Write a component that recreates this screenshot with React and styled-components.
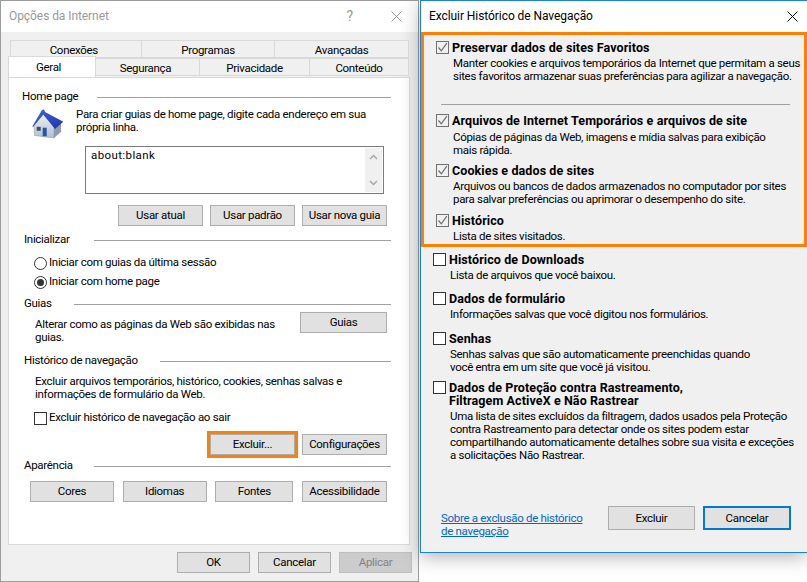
import React from 'react'
import styled, { createGlobalStyle } from 'styled-components'

const GlobalStyle = createGlobalStyle`
    html, body {
        margin: 0;
        padding: 0;
        background: #fff;
    }
    body {
        font-family: Roboto, "Liberation Sans", sans-serif;
        font-size: 11.5px;
        letter-spacing: -0.3px;
        line-height: 13px;
        color: #000;
    }
`

const Desktop = styled.div`
    display: flex;
    align-items: flex-start;
    width: 807px;
    height: 582px;
    overflow: hidden;
`

const OptionsWindow = styled.div`
    box-sizing: border-box;
    flex: none;
    width: 419px;
    height: 582px;
    border: 1px solid #9c9c9c;
    background: #f0f0f0;
    display: flex;
    flex-direction: column;
`

const TitleBar = styled.div`
    flex: none;
    display: flex;
    align-items: center;
    height: 31px;
    padding: 0 ${p => p.$right}px 0 8px;
    background: #fff;
    color: ${p => (p.$inactive ? '#999' : '#000')};
    font-size: 12px;
    letter-spacing: -0.07px;
`

const TitleText = styled.span`
    flex: 1;
`

const HelpMark = styled.span`
    margin-right: 38px;
    color: #999;
    font-size: 14px;
`

const Tabs = styled.div`
    margin: 8px 9px 0 7px;
    height: 37px;
    display: flex;
    flex-direction: column;
`

const TabRow = styled.div`
    display: flex;
    height: 18px;
    padding-left: ${p => p.$indent || 0}px;
`

const Tab = styled.div`
    box-sizing: border-box;
    width: ${p => p.$w}px;
    height: ${p => (p.$active ? 21 : 18)}px;
    margin-top: ${p => (p.$active ? -2 : 0)}px;
    padding-top: ${p => (p.$active ? 0 : 2)}px;
    padding-right: ${p => p.$shift || 0}px;
    position: relative;
    z-index: ${p => (p.$active ? 2 : 1)};
    display: flex;
    align-items: center;
    justify-content: center;
    border: 1px solid #d9d9d9;
    border-bottom: ${p => (p.$active ? 'none' : '1px solid #d9d9d9')};
    border-left-width: ${p => (p.$first || p.$active ? 1 : 0)}px;
    background: ${p => (p.$active ? '#fff' : '#f0f0f0')};
`

const Panel = styled.div`
    box-sizing: border-box;
    margin: 0 8px 0 7px;
    height: 468px;
    padding: 11px 18px 0 13px;
    border: 1px solid #d9d9d9;
    background: #fff;
    display: flex;
    flex-direction: column;
`

const GroupTitle = styled.div`
    display: flex;
    align-items: center;
    height: 16px;
    flex: none;
    margin-top: ${p => p.$top || 0}px;
    padding-left: ${p => p.$indent || 0}px;
    white-space: nowrap;
`

const GroupLabel = styled.span`
    width: ${p => p.$w}px;
    flex: none;
    padding-bottom: 2px;
`

const GroupLine = styled.span`
    flex: 1;
    height: 1px;
    background: #a0a0a0;
`

const IntroRow = styled.div`
    display: flex;
    height: 30px;
    margin-top: 4px;
    padding-left: 10px;
`

const HouseIcon = styled.svg`
    width: 32px;
    height: 30px;
    flex: none;
`

const IntroText = styled.div`
    margin: -1px 0 0 12px;
    white-space: nowrap;
`

const HomeBox = styled.div`
    box-sizing: border-box;
    display: flex;
    justify-content: space-between;
    width: 299px;
    height: 48px;
    margin: 7px 0 0 63px;
    padding: 1px;
    border: 1px solid #7a7a7a;
`

const HomeValue = styled.span`
    padding: 1px 0 0 4px;
    letter-spacing: 0.4px;
`

const ScrollBar = styled.div`
    width: 17px;
    background: #f0f0f0;
    display: flex;
    flex-direction: column;
    justify-content: space-between;
    align-items: center;
    padding: 6px 0;
`

const Chevron = styled.svg`
    width: 9px;
    height: 6px;
`

const ButtonRow = styled.div`
    display: flex;
    justify-content: ${p => p.$spread ? 'space-between' : 'flex-end'};
    gap: ${p => p.$spread ? 0 : 7}px;
    height: 21px;
    margin-top: ${p => p.$top}px;
    padding: 0 4px 0 ${p => p.$left || 0}px;
`

const Button = styled.button`
    box-sizing: border-box;
    flex: none;
    width: ${p => p.$w}px;
    height: 21px;
    padding: 0;
    border: 1px solid ${p => (p.disabled ? '#bfbfbf' : '#adadad')};
    border-radius: 0;
    background: ${p => (p.disabled ? '#cccccc' : '#e1e1e1')};
    color: ${p => (p.disabled ? '#838383' : '#000')};
    font: inherit;
    letter-spacing: inherit;
    outline: ${p => (p.$marked ? '3px solid #ff8000' : 'none')};
    outline-offset: 0;
`

const OptionRow = styled.div`
    display: flex;
    align-items: center;
    gap: 2px;
    height: 16px;
    margin-top: ${p => p.$top}px;
    padding-left: 12px;
    white-space: nowrap;
`

const OptionLabel = styled.span`
    padding-bottom: 2px;
`

const Radio = styled.span`
    box-sizing: border-box;
    flex: none;
    width: 13px;
    height: 13px;
    border: 1px solid #333;
    border-radius: 50%;
    display: flex;
    align-items: center;
    justify-content: center;

    &::after {
        content: '';
        width: 7px;
        height: 7px;
        border-radius: 50%;
        background: ${p => (p.$on ? '#333' : 'transparent')};
    }
`

const Check = styled.span`
    box-sizing: border-box;
    flex: none;
    width: 13px;
    height: 13px;
    border: 1px solid ${p => (p.$on ? '#707070' : '#333')};
    background: ${p => (p.$bg ? '#fff' : 'transparent')};
    display: flex;
    align-items: center;
    justify-content: center;
`

const TabsGuideRow = styled.div`
    display: flex;
    justify-content: space-between;
    height: 41px;
    padding: 0 4px 0 13px;
    flex: none;
`

const Para = styled.div`
    margin-top: ${p => p.$top || 0}px;
    padding-left: ${p => p.$indent || 0}px;
    white-space: nowrap;
`

const DialogFooter = styled.div`
    display: flex;
    justify-content: flex-end;
    gap: 8px;
    padding: 7px 6px 0 0;
`

const DeleteWindow = styled.div`
    box-sizing: border-box;
    flex: none;
    width: 387px;
    height: 553px;
    margin-left: 1px;
    border: 1px solid #1883d7;
    border-right: none;
    background: #f0f0f0;
    display: flex;
    flex-direction: column;
    box-shadow: 0 4px 18px rgba(0, 0, 0, 0.3);
    position: relative;
`

const CloseIcon = styled.svg`
    width: 11px;
    height: 11px;
    flex: none;
`

const Highlight = styled.div`
    box-sizing: border-box;
    height: 215px;
    border: 3px solid #ff8000;
    flex: none;
    display: flex;
    flex-direction: column;
`

const Divider = styled.div`
    height: 1px;
    width: 349px;
    margin: 21px 0 0 17px;
    background: #a0a0a0;
    flex: none;
`

const Item = styled.div`
    display: flex;
    gap: 3px;
    margin-top: ${p => p.$top}px;
    padding-left: ${p => p.$left}px;
    flex: none;
`

const ItemBody = styled.div`
    white-space: nowrap;
`

const ItemTitle = styled.div`
    font-weight: 700;
    font-size: 12.5px;
    letter-spacing: 0.1px;
`

const ItemText = styled.div`
    margin: ${p => p.$gap}px 0 0 1px;
`

const ItemFooter = styled.div`
    margin-top: auto;
    padding: 0 16px 14px 20px;
    display: flex;
    align-items: flex-start;
    gap: 8px;
`

const HelpLink = styled.a`
    flex: 1;
    margin-top: 6px;
    color: #0066cc;
    text-decoration: underline;
    white-space: nowrap;
`

const FooterButton = styled(Button)`
    height: 24px;
    width: ${p => p.$w}px;
    border: ${p => (p.$primary ? '2px solid #0078d7' : '1px solid #adadad')};
`

const Tick = () => (
    <svg width="11" height="11" viewBox="0 0 11 11">
        <path d="M1.5 5.5 L4.3 8.8 L9.8 1.2" fill="none" stroke="#6e6e6e" strokeWidth="1.2" />
    </svg>
)

const House = () => (
    <HouseIcon viewBox="0 0 32 30">
        <defs>
            <linearGradient id="front" x1="0" y1="0" x2="0" y2="1">
                <stop offset="0" stopColor="#eef1f6" />
                <stop offset="1" stopColor="#b4bfcc" />
            </linearGradient>
            <linearGradient id="roof" x1="0" y1="0" x2="1" y2="1">
                <stop offset="0" stopColor="#3f66dc" />
                <stop offset="1" stopColor="#1d35a8" />
            </linearGradient>
        </defs>
        <path d="M22 19 L29 13 L29 23 L22 29 Z" fill="#8d9cb2" />
        <path d="M11.3 5 L2 16 L2.5 26.5 L22 29 L22 18 Z" fill="url(#front)" stroke="#8793a5" strokeWidth="0.5" />
        <path d="M10 1 L12 0.6 L13 3 L31.3 12.7 L23 20 L11.3 5.6 L1 18 L0.3 17.4 Z" fill="url(#roof)" />
        <rect x="4.7" y="17.8" width="4" height="4" fill="#3d4f68" />
        <rect x="10.7" y="18.7" width="4" height="8.6" fill="#1f5aa6" />
    </HouseIcon>
)

const X = ({ color }) => (
    <CloseIcon viewBox="0 0 11 11">
        <path d="M0.5 0.5 L10.5 10.5 M10.5 0.5 L0.5 10.5" stroke={color} strokeWidth="1" fill="none" />
    </CloseIcon>
)

const DeleteItem = ({ top, on, gap = 3, title, lines }) => (
    <Item $top={top} $left={12}>
        <Check $on={on} $bg={!on}>{on && <Tick />}</Check>
        <ItemBody>
            <ItemTitle>{title.map(t => <div key={t}>{t}</div>)}</ItemTitle>
            <ItemText $gap={gap}>{lines.map(t => <div key={t}>{t}</div>)}</ItemText>
        </ItemBody>
    </Item>
)

export default function App() {
    return (
        <Desktop>
            <GlobalStyle />
            <OptionsWindow>
                <TitleBar $inactive $right={16}>
                    <TitleText>Opções da Internet</TitleText>
                    <HelpMark>?</HelpMark>
                    <X color="#999" />
                </TitleBar>
                <Tabs>
                    <TabRow $indent={2}>
                        <Tab $first $w={132} $shift={4}>Conexões</Tab>
                        <Tab $w={134}>Programas</Tab>
                        <Tab $w={134}>Avançadas</Tab>
                    </TabRow>
                    <TabRow>
                        <Tab $active $w={88} $shift={7}>Geral</Tab>
                        <Tab $w={104} $shift={4}>Segurança</Tab>
                        <Tab $w={110}>Privacidade</Tab>
                        <Tab $w={99}>Conteúdo</Tab>
                    </TabRow>
                </Tabs>
                <Panel>
                    <GroupTitle>
                        <GroupLabel $w={75}>Home page</GroupLabel>
                        <GroupLine />
                    </GroupTitle>
                    <IntroRow>
                        <House />
                        <IntroText>
                            Para criar guias de home page, digite cada endereço em sua<br />
                            própria linha.
                        </IntroText>
                    </IntroRow>
                    <HomeBox>
                        <HomeValue>about:blank</HomeValue>
                        <ScrollBar>
                            <Chevron viewBox="0 0 9 6"><path d="M1 5 L4.5 1.5 L8 5" fill="none" stroke="#a6a6a6" strokeWidth="1.5" /></Chevron>
                            <Chevron viewBox="0 0 9 6"><path d="M1 1 L4.5 4.5 L8 1" fill="none" stroke="#a6a6a6" strokeWidth="1.5" /></Chevron>
                        </ScrollBar>
                    </HomeBox>
                    <ButtonRow $top={11}>
                        <Button $w={85}>Usar atual</Button>
                        <Button $w={85}>Usar padrão</Button>
                        <Button $w={85}>Usar nova guia</Button>
                    </ButtonRow>
                    <GroupTitle $top={6} $indent={2}>
                        <GroupLabel $w={70}>Inicializar</GroupLabel>
                        <GroupLine />
                    </GroupTitle>
                    <OptionRow $top={7}><Radio /><OptionLabel>Iniciar com guias da última sessão</OptionLabel></OptionRow>
                    <OptionRow $top={3}><Radio $on /><OptionLabel>Iniciar com home page</OptionLabel></OptionRow>
                    <GroupTitle $top={6} $indent={2}>
                        <GroupLabel $w={50}>Guias</GroupLabel>
                        <GroupLine />
                    </GroupTitle>
                    <TabsGuideRow>
                        <Para $top={6}>
                            Alterar como as páginas da Web são exibidas nas<br />
                            guias.
                        </Para>
                        <Button $w={87}>Guias</Button>
                    </TabsGuideRow>
                    <GroupTitle $indent={2}>
                        <GroupLabel $w={136}>Histórico de navegação</GroupLabel>
                        <GroupLine />
                    </GroupTitle>
                    <Para $top={6} $indent={13}>
                        Excluir arquivos temporários, histórico, cookies, senhas salvas e<br />
                        informações de formulário da Web.
                    </Para>
                    <OptionRow $top={9}><Check /><OptionLabel>Excluir histórico de navegação ao sair</OptionLabel></OptionRow>
                    <ButtonRow $top={8}>
                        <Button $w={85} $marked>Excluir...</Button>
                        <Button $w={85}>Configurações</Button>
                    </ButtonRow>
                    <GroupTitle $top={3} $indent={2}>
                        <GroupLabel $w={70}>Aparência</GroupLabel>
                        <GroupLine />
                    </GroupTitle>
                    <ButtonRow $top={7} $spread $left={8}>
                        <Button $w={84}>Cores</Button>
                        <Button $w={84}>Idiomas</Button>
                        <Button $w={78}>Fontes</Button>
                        <Button $w={85}>Acessibilidade</Button>
                    </ButtonRow>
                </Panel>
                <DialogFooter>
                    <Button $w={73}>OK</Button>
                    <Button $w={73}>Cancelar</Button>
                    <Button $w={73} disabled>Aplicar</Button>
                </DialogFooter>
            </OptionsWindow>
            <DeleteWindow>
                <TitleBar $right={9}>
                    <TitleText>Excluir Histórico de Navegação</TitleText>
                    <X color="#000" />
                </TitleBar>
                <Highlight>
                    <DeleteItem top={6} on title={['Preservar dados de sites Favoritos']} lines={['Manter cookies e arquivos temporários da Internet que permitam a seus', 'sites favoritos armazenar suas preferências para agilizar a navegação.']} />
                    <Divider />
                    <DeleteItem top={9} on gap={4} title={['Arquivos de Internet Temporários e arquivos de site']} lines={['Cópias de páginas da Web, imagens e mídia salvas para exibição', 'mais rápida.']} />
                    <DeleteItem top={7} on title={['Cookies e dados de sites']} lines={['Arquivos ou bancos de dados armazenados no computador por sites', 'para salvar preferências ou aprimorar o desempenho do site.']} />
                    <DeleteItem top={8} on title={['Histórico']} lines={['Lista de sites visitados.']} />
                </Highlight>
                <DeleteItem top={6} title={['Histórico de Downloads']} lines={['Lista de arquivos que você baixou.']} />
                <DeleteItem top={10} title={['Dados de formulário']} lines={['Informações salvas que você digitou nos formulários.']} />
                <DeleteItem top={11} title={['Senhas']} lines={['Senhas salvas que são automaticamente preenchidas quando', 'você entra em um site que você já visitou.']} />
                <DeleteItem top={7} title={['Dados de Proteção contra Rastreamento,', 'Filtragem ActiveX e Não Rastrear']} lines={['Uma lista de sites excluídos da filtragem, dados usados pela Proteção', 'contra Rastreamento para detectar onde os sites podem estar', 'compartilhando automaticamente detalhes sobre sua visita e exceções', 'a solicitações Não Rastrear.']} />
                <ItemFooter>
                    <HelpLink>Sobre a exclusão de histórico<br />de navegação</HelpLink>
                    <FooterButton $w={87}>Excluir</FooterButton>
                    <FooterButton $w={88} $primary>Cancelar</FooterButton>
                </ItemFooter>
            </DeleteWindow>
        </Desktop>
    )
}
